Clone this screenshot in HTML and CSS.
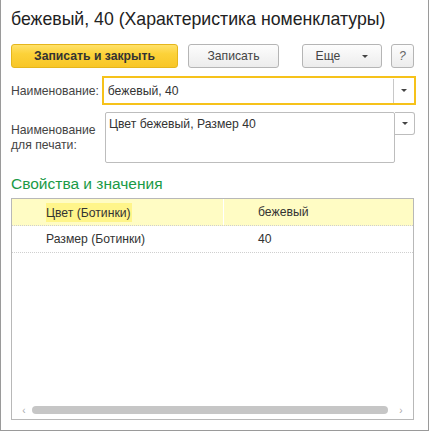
FILE: index.html
```html
<!DOCTYPE html>
<html>
<head>
<meta charset="utf-8">
<link rel="stylesheet" href="styles.css">
</head>
<body>
<div class="window">
  <div class="title">бежевый, 40 (Характеристика номенклатуры)</div>
  <div class="toolbar">
    <div class="btn primary">Записать и закрыть</div>
    <div class="btn save">Записать</div>
    <div class="spacer"></div>
    <div class="btn more">Еще <span class="caret"></span></div>
    <div class="btn help">?</div>
  </div>
  <div class="row name-row">
    <div class="label">Наименование:</div>
    <div class="input focused">
      <div class="value">бежевый, 40</div>
      <div class="drop"><span class="caret"></span></div>
    </div>
  </div>
  <div class="row print-row">
    <div class="label two">Наименование<br>для печати:</div>
    <div class="textarea">Цвет бежевый, Размер 40</div>
    <div class="drop-btn"><span class="caret"></span></div>
  </div>
  <div class="section">Свойства и значения</div>
  <div class="table">
    <div class="tr selected">
      <div class="td c1"><span class="hl">Цвет (Ботинки)</span></div>
      <div class="td c2">бежевый</div>
    </div>
    <div class="tr">
      <div class="td c1">Размер (Ботинки)</div>
      <div class="td c2">40</div>
    </div>
    <div class="fill"></div>
    <div class="hscroll">
      <span class="arr">‹</span>
      <div class="thumb"></div>
      <span class="arr">›</span>
    </div>
  </div>
</div>
</body>
</html>
```

FILE: styles.css
```css
* { box-sizing: border-box; }
html, body { margin: 0; padding: 0; background: #fff; }
body { font-family: Arial, "Liberation Sans", sans-serif; color: #333; font-size: 12.2px; }
.window {
  width: 429px; height: 431px;
  border: 1px solid #9a9a9a;
  border-top: none;
  padding: 0 12px 0 10px;
  display: flex; flex-direction: column;
}
.title { font-size: 17.7px; color: #222; margin-top: 9px; height: 20px; line-height: 20px; white-space: nowrap; }
.toolbar { display: flex; align-items: center; margin-top: 15px; height: 24px; width: 403px; }
.btn {
  height: 24px; border: 1px solid #b5b5b5; border-radius: 3px;
  background: linear-gradient(#fdfdfd, #ececec);
  display: flex; align-items: center; justify-content: center;
  color: #444; font-size: 12.2px;
}
.btn.primary {
  width: 167px; background: linear-gradient(#ffe16a, #fcd239 40%, #f8c627);
  border-color: #e5b61c; font-weight: bold; color: #333;
}
.btn.save { width: 91px; margin-left: 10px; }
.spacer { flex: 1; }
.btn.more { width: 80px; }
.btn.more .caret { margin-left: 22px; }
.btn.help { width: 23px; margin-left: 9px; font-style: italic; color: #666; }
.caret {
  display: inline-block; width: 0; height: 0;
  border-left: 3px solid transparent; border-right: 3px solid transparent;
  border-top: 3px solid #444;
}
.row { display: flex; }
.name-row { margin-top: 8px; align-items: center; }
.label { width: 91px; color: #444; white-space: nowrap; }
.input {
  width: 315px; height: 29px; border: 2px solid #f6c21a;
  display: flex; align-items: center;
}
.input .value { flex: 1; padding-left: 4px; color: #333; }
.input .drop {
  width: 21px; height: 24px; border-left: 1px solid #c8c8c8;
  display: flex; align-items: center; justify-content: center;
}
.print-row { margin-top: 7px; }
.print-row .label { width: 94px; line-height: 15px; padding-top: 11px; }
.textarea {
  width: 290px; height: 51px; border: 1px solid #bdbdbd; border-radius: 2px;
  padding: 4px 3px; color: #333;
}
.drop-btn {
  width: 20px; height: 23px; border: 1px solid #bdbdbd; border-left: none;
  border-radius: 0 3px 3px 0;
  display: flex; align-items: center; justify-content: center;
}
.section { color: #1a9a46; font-size: 15.5px; margin-top: 12px; height: 18px; line-height: 18px; }
.table {
  margin-top: 5px; width: 403px; flex: 0 0 auto; height: 222px;
  border: 1px solid #b8b8b8;
  display: flex; flex-direction: column;
}
.tr { display: flex; height: 27px; align-items: center; border-bottom: 1px dotted #cfcfcf; }
.tr.selected { background: #fffcc4; }
.td { white-space: nowrap; }
.c1 { width: 212px; padding-left: 34px; border-right: 1px solid transparent; }
.tr.selected .c1 { border-right-color: #fff; height: 100%; display: flex; align-items: center; }
.c2 { padding-left: 34px; }
.hl { background: #fff58a; padding: 3px 1px 2px 0; }
.fill { flex: 1; }
.hscroll { display: flex; align-items: center; height: 10px; margin-bottom: 4px; padding: 0 6px 0 6px; }
.hscroll .arr { color: #aaa; font-size: 10px; width: 12px; text-align: center; }
.thumb { flex: 1; height: 8px; border-radius: 4px; background: #c6c6c6; margin: 0 7px 0 2px; }
```
